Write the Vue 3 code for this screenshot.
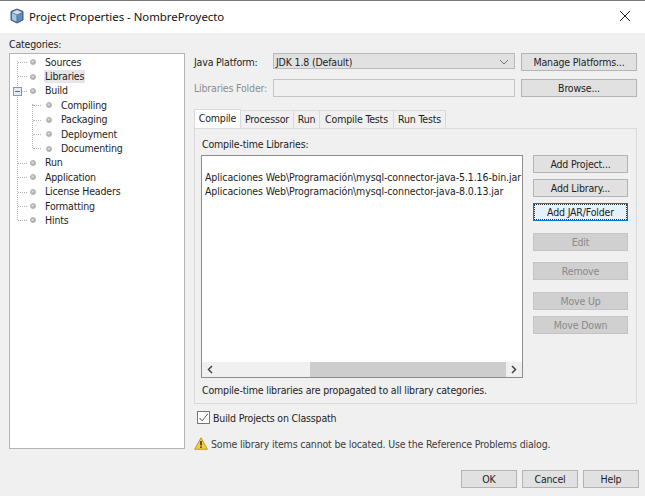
<script setup>
const tree = [
  { label: 'Sources', lvl: 0 },
  { label: 'Libraries', lvl: 0, sel: true },
  { label: 'Build', lvl: 0, toggle: true },
  { label: 'Compiling', lvl: 1 },
  { label: 'Packaging', lvl: 1 },
  { label: 'Deployment', lvl: 1 },
  { label: 'Documenting', lvl: 1, last: true },
  { label: 'Run', lvl: 0 },
  { label: 'Application', lvl: 0 },
  { label: 'License Headers', lvl: 0 },
  { label: 'Formatting', lvl: 0 },
  { label: 'Hints', lvl: 0, last: true }
]
const tabs = [
  { label: 'Compile', w: 47 },
  { label: 'Processor', w: 53 },
  { label: 'Run', w: 26 },
  { label: 'Compile Tests', w: 74 },
  { label: 'Run Tests', w: 52 }
]
</script>

<template>
  <div class="dialog">
    <header class="title">
      <svg class="appicon" width="16" height="16" viewBox="0 0 16 16">
        <path d="M8 1 L14 3.5 V12 L8 15 L2 12 V3.5Z" fill="#4d6f99" stroke="#3f5f88" stroke-width="1" stroke-linejoin="round" />
        <path d="M3 4.2 L8 2 L13 4.2 L8 6.4Z" fill="#d8dee6" />
        <path d="M3 5 L7.5 7 V13.8 L3 11.6Z" fill="#a9c6e6" />
        <path d="M8.5 7 L13 5 V11.6 L8.5 13.8Z" fill="#5f8dc2" />
      </svg>
      <span class="title-text">Project Properties - NombreProyecto</span>
      <svg class="close" width="12" height="12" viewBox="0 0 12 12">
        <path d="M1 1 L11 11 M11 1 L1 11" stroke="#222" stroke-width="1" fill="none" />
      </svg>
    </header>

    <div class="body">
      <aside class="left">
        <div class="cat-label">Categories:</div>
        <div class="tree">
          <div class="tree-lines"></div>
          <div class="tree-lines sub"></div>
          <div v-for="n in tree" :key="n.label" class="node" :class="{ sub: n.lvl === 1 }">
            <span class="dash"></span>
            <span v-if="n.toggle" class="toggle"></span>
            <span class="bullet"></span>
            <span class="node-label" :class="{ sel: n.sel }">{{ n.label }}</span>
          </div>
        </div>
      </aside>

      <main class="right">
        <div class="form">
          <label>Java Platform:</label>
          <div class="select">
            <span>JDK 1.8 (Default)</span>
            <svg width="10" height="6" viewBox="0 0 10 6"><path d="M1 1 L5 5 L9 1" stroke="#777" fill="none" /></svg>
          </div>
          <button class="btn wide">Manage Platforms...</button>
          <label class="dim">Libraries Folder:</label>
          <div class="input"></div>
          <button class="btn wide">Browse...</button>
        </div>

        <div class="tabs">
          <div
            v-for="(t, i) in tabs"
            :key="t.label"
            class="tab"
            :class="{ active: i === 0 }"
            :style="{ width: t.w + 'px' }"
          >{{ t.label }}</div>
        </div>
        <section class="panel">
          <div class="panel-label">Compile-time Libraries:</div>
          <div class="panel-main">
            <div class="list">
              <div class="list-body">
                <div>Aplicaciones Web\Programación\mysql-connector-java-5.1.16-bin.jar</div>
                <div>Aplicaciones Web\Programación\mysql-connector-java-8.0.13.jar</div>
              </div>
              <div class="hscroll">
                <svg width="16" height="15" viewBox="0 0 16 15"><path d="M10 4 L6.5 7.5 L10 11" stroke="#444" stroke-width="1.5" fill="none" /></svg>
                <div class="track"><div class="thumb"></div></div>
                <svg width="16" height="15" viewBox="0 0 16 15"><path d="M6 4 L9.5 7.5 L6 11" stroke="#444" stroke-width="1.5" fill="none" /></svg>
              </div>
            </div>
            <div class="side">
              <button class="btn">Add Project...</button>
              <button class="btn">Add Library...</button>
              <button class="btn focus"><span>Add JAR/Folder</span></button>
              <button class="btn off gap1">Edit</button>
              <button class="btn off gap2">Remove</button>
              <button class="btn off gap1">Move Up</button>
              <button class="btn off">Move Down</button>
            </div>
          </div>
          <div class="note">Compile-time libraries are propagated to all library categories.</div>
        </section>

        <div class="check-row">
          <span class="check">
            <svg width="11" height="11" viewBox="0 0 11 11"><path d="M1.5 6 L4.2 8.8 L9.8 1.8" stroke="#555" stroke-width="1" fill="none" /></svg>
          </span>
          <span>Build Projects on Classpath</span>
        </div>

        <div class="warn">
          <svg width="14" height="13" viewBox="0 0 14 13">
            <path d="M7 .8 L13.4 12.3 H.6Z" fill="#f5cf3a" stroke="#a8882a" stroke-width=".8" />
            <path d="M7 4 V8.5 M7 9.6 V11" stroke="#222" stroke-width="1.4" />
          </svg>
          <span>Some library items cannot be located. Use the Reference Problems dialog.</span>
        </div>

        <footer class="actions">
          <button class="btn act">OK</button>
          <button class="btn act">Cancel</button>
          <button class="btn act">Help</button>
        </footer>
      </main>
    </div>
  </div>
</template>

<style scoped>
.dialog {
  width: 645px;
  height: 496px;
  background: #f0f0f0;
  font-family: "DejaVu Sans", "Liberation Sans", sans-serif;
  font-stretch: condensed;
  font-size: 10.5px;
  letter-spacing: -0.17px;
  color: #1e1e1e;
  overflow: hidden;
  display: flex;
  flex-direction: column;
}
.title {
  height: 30px;
  background: #fff;
  border-top: 1px solid #7a7a7a;
  display: flex;
  align-items: center;
  padding: 0 14px 2px 9px;
  box-sizing: content-box;
  flex: none;
  margin-bottom: -2px;
}
.appicon { margin-right: 4px; flex: none; }
.title-text {
  font-family: "Noto Sans", sans-serif;
  font-stretch: normal;
  font-size: 11.4px;
  letter-spacing: -0.02px;
  color: #111;
  flex: 1;
}
.body {
  flex: 1;
  display: flex;
  padding: 6px 7px 8px 9px;
  min-height: 0;
}
.left { width: 176px; flex: none; display: flex; flex-direction: column; }
.cat-label { height: 16px; line-height: 14px; }
.tree {
  width: 176px;
  height: 396px;
  box-sizing: border-box;
  background: #fff;
  border: 1px solid #b4b4b4;
  padding-top: 1px;
  position: relative;
}
.tree-lines {
  position: absolute;
  left: 7px;
  top: 7px;
  height: 159px;
  border-left: 1px dotted #b5b5b5;
}
.tree-lines.sub { left: 22px; top: 50px; height: 44px; }
.node {
  height: 14.4px;
  display: flex;
  align-items: center;
  position: relative;
  padding-left: 20px;
}
.node.sub { padding-left: 36px; }
.dash {
  position: absolute;
  left: 8px;
  width: 9px;
  top: 7px;
  border-top: 1px dotted #b5b5b5;
}
.node.sub .dash { left: 23px; width: 8px; }
.toggle {
  position: absolute;
  left: 3px;
  top: 3px;
  width: 7px;
  height: 7px;
  background: #e4ebf3;
  border: 1px solid #8a98aa;
  z-index: 1;
}
.toggle::after {
  content: "";
  position: absolute;
  left: 1px;
  right: 1px;
  top: 3px;
  border-top: 1px solid #4f6f96;
}
.bullet {
  border-radius: 50%;
  background: radial-gradient(circle at 40% 40%, #e2e2e2, #8f8f8f);
  border: 1px solid #b0b0b0;
  box-sizing: content-box;
  flex: none;
  margin-right: 9px;
  width: 4px;
  height: 4px;
}
.node-label { padding: 0 1px; line-height: 13px; margin-left: -1px; }
.node-label.sel { background: #e6e6e6; }

.right { flex: 1; margin-left: 8px; display: flex; flex-direction: column; min-width: 0; }
.form {
  display: grid;
  grid-template-columns: 80px 242px 122px;
  row-gap: 8px;
  align-items: start;
  margin-top: 16px;
}
.form .wide { margin-left: 6px; width: 116px; }
.form label { white-space: nowrap; line-height: 18px; padding-left: 1px; }
.dim { color: #8e8e8e; }
.select {
  height: 16px;
  line-height: 16px;
  box-sizing: border-box;
  background: #e1e1e1;
  border: 1px solid #b9b9b9;
  display: flex;
  align-items: center;
  justify-content: space-between;
  padding: 1px 5px 0 2px;
}
.input {
  height: 18px;
  box-sizing: border-box;
  background: #f0f0f0;
  border: 1px solid #c4c4c4;
}
.btn {
  display: block;
  box-sizing: border-box;
  height: 18px;
  padding: 0;
  margin: 0;
  background: #e1e1e1;
  border: 1px solid #b4b4b4;
  font: inherit;
  font-stretch: condensed;
  letter-spacing: -0.17px;
  color: #1e1e1e;
  text-align: center;
}
.tabs { display: flex; margin-top: 12px; margin-left: 1px; height: 19px; align-items: flex-end; }
.tab {
  height: 18px;
  line-height: 17px;
  box-sizing: border-box;
  text-align: center;
  background: #f0f0f0;
  border: 1px solid #dadada;
  border-bottom: 0;
  border-left: 0;
  white-space: nowrap;
  flex: none;
}
.tab.active {
  height: 19px;
  background: #fff;
  border-left: 1px solid #dadada;
}
.panel {
  width: 443px;
  margin-left: 1px;
  height: 276px;
  box-sizing: border-box;
  border: 1px solid #dadada;
  padding: 8px 7px 0 6px;
  display: flex;
  flex-direction: column;
  flex: none;
}
.panel-label { height: 18px; line-height: 14px; padding-left: 1px; }
.panel-main { display: flex; height: 223px; flex: none; }
.list {
  width: 322px;
  height: 223px;
  box-sizing: border-box;
  border: 1px solid #8c8c8c;
  background: #fff;
  display: flex;
  flex-direction: column;
  flex: none;
}
.list-body {
  flex: 1;
  padding: 14px 0 0 3px;
  line-height: 14px;
  white-space: nowrap;
  overflow: hidden;
  letter-spacing: -0.1px;
}
.hscroll { height: 15px; background: #f0f0f0; display: flex; align-items: center; flex: none; }
.hscroll svg { flex: none; }
.track { flex: 1; height: 15px; padding-left: 92px; box-sizing: border-box; }
.thumb { height: 15px; background: #cdcdcd; }
.side { width: 95px; margin-left: 10px; display: flex; flex-direction: column; gap: 6px; flex: none; }
.side .btn { width: 95px; flex: none; }
.btn.focus {
  background: #e5f1fb;
  border-color: #0078d7;
  position: relative;
}
.btn.focus span {
  display: block;
  margin: 0;
  line-height: 14px;
  border: 1px dotted #333;
}
.btn.off { background: #d0d0d0; border-color: #c4c4c4; color: #8a8a8a; }
.gap1 { margin-top: 6px; }
.gap2 { margin-top: 5px; }
.note { margin-top: 5px; line-height: 14px; padding-left: 1px; }
.check-row { display: flex; align-items: center; margin-top: 6px; height: 15px; margin-left: 4px; }
.check {
  width: 13px;
  height: 13px;
  box-sizing: border-box;
  background: #fff;
  border: 1px solid #777;
  display: flex;
  align-items: center;
  justify-content: center;
  margin-right: 3px;
  flex: none;
}
.warn {
  display: flex;
  align-items: center;
  gap: 3px;
  margin-top: 11px;
  margin-left: 1px;
  height: 15px;
  color: #3c3c3c;
}
.actions { display: flex; justify-content: flex-end; gap: 5px; margin-top: 19px; margin-right: -1px; }
.act { width: 56px; height: 18px; }
</style>
